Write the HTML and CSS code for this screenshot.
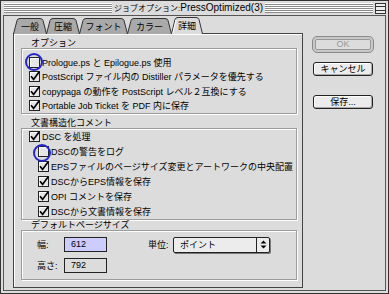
FILE: index.html
```html
<!DOCTYPE html>
<html>
<head>
<meta charset="utf-8">
<link rel="stylesheet" href="styles.css">
</head>
<body>
<div class="window">
  <div class="titlebar">
    <div class="stripes"></div>
    <div class="title"><span class="tj">ジョブオプション:</span>PressOptimized(3)</div>
    <div class="stripes"></div>
    <div class="wbox"><div class="wline"></div></div>
  </div>
  <div class="frame">
    <div class="left">
      <div class="tabs">
        <div class="tab t1"><svg width="34" height="17" viewBox="0 0 34 17"><path d="M0.5 17 L4 3.5 Q4.6 1.5 7 1.5 H27 Q29.4 1.5 30 3.5 L33.5 17" fill="#a9a9a9" stroke="#333"/></svg><span>一般</span></div>
        <div class="tab t2"><svg width="34" height="17" viewBox="0 0 34 17"><path d="M0.5 17 L4 3.5 Q4.6 1.5 7 1.5 H27 Q29.4 1.5 30 3.5 L33.5 17" fill="#a9a9a9" stroke="#333"/></svg><span>圧縮</span></div>
        <div class="tab t3"><svg width="49" height="17" viewBox="0 0 49 17"><path d="M0.5 17 L4 3.5 Q4.6 1.5 7 1.5 H42 Q44.4 1.5 45 3.5 L48.5 17" fill="#a9a9a9" stroke="#333"/></svg><span>フォント</span></div>
        <div class="tab t4"><svg width="45" height="17" viewBox="0 0 45 17"><path d="M0.5 17 L4 3.5 Q4.6 1.5 7 1.5 H38 Q40.4 1.5 41 3.5 L44.5 17" fill="#a9a9a9" stroke="#333"/></svg><span>カラー</span></div>
        <div class="tab t5 active"><svg width="32" height="17" viewBox="0 0 32 17"><path d="M0.5 17 L4 2.5 Q4.6 0.5 7 0.5 H25 Q27.4 0.5 28 2.5 L31.5 17" fill="#dcdcdc" stroke="#333"/><path d="M1.8 16.5 L5 3" stroke="#fff" fill="none"/></svg><span>詳細</span></div>
      </div>
      <div class="panel">
        <div class="group g1">
          <div class="glabel">オプション</div>
          <div class="gbox">
            <div class="row"><span class="cb"></span><span>Prologue.ps と Epilogue.ps 使用</span></div>
            <div class="row"><span class="cb on"><svg class="ck" viewBox="0 0 11 11"><path d="M2 5.2 L4.6 8.4 L10.2 0.8"/></svg></span><span>PostScript ファイル内の Distiller パラメータを優先する</span></div>
            <div class="row"><span class="cb on"><svg class="ck" viewBox="0 0 11 11"><path d="M2 5.2 L4.6 8.4 L10.2 0.8"/></svg></span><span>copypaga の動作を PostScript レベル２互換にする</span></div>
            <div class="row"><span class="cb on"><svg class="ck" viewBox="0 0 11 11"><path d="M2 5.2 L4.6 8.4 L10.2 0.8"/></svg></span><span>Portable Job Ticket を PDF 内に保存</span></div>
          </div>
        </div>
        <div class="group g2">
          <div class="glabel">文書構造化コメント</div>
          <div class="gbox">
            <div class="row"><span class="cb on"><svg class="ck" viewBox="0 0 11 11"><path d="M2 5.2 L4.6 8.4 L10.2 0.8"/></svg></span><span>DSC を処理</span></div>
            <div class="row sub"><span class="cb"></span><span>DSCの警告をログ</span></div>
            <div class="row sub"><span class="cb on"><svg class="ck" viewBox="0 0 11 11"><path d="M2 5.2 L4.6 8.4 L10.2 0.8"/></svg></span><span>EPSファイルのページサイズ変更とアートワークの中央配置</span></div>
            <div class="row sub"><span class="cb on"><svg class="ck" viewBox="0 0 11 11"><path d="M2 5.2 L4.6 8.4 L10.2 0.8"/></svg></span><span>DSCからEPS情報を保存</span></div>
            <div class="row sub"><span class="cb on"><svg class="ck" viewBox="0 0 11 11"><path d="M2 5.2 L4.6 8.4 L10.2 0.8"/></svg></span><span>OPI コメントを保存</span></div>
            <div class="row sub"><span class="cb on"><svg class="ck" viewBox="0 0 11 11"><path d="M2 5.2 L4.6 8.4 L10.2 0.8"/></svg></span><span>DSCから文書情報を保存</span></div>
          </div>
        </div>
        <div class="group g3">
          <div class="glabel">デフォルトページサイズ</div>
          <div class="gbox sizes">
            <span class="flabel">幅:</span>
            <span class="field hl">612</span>
            <span></span>
            <span class="flabel">単位:</span>
            <span class="select"><span class="sval">ポイント</span><span class="sarrow"><svg width="7" height="9" viewBox="0 0 7 9"><path d="M3.5 0.5 L6.5 3.5 H0.5 Z M3.5 8.5 L6.5 5.5 H0.5 Z" fill="#000"/></svg></span></span>
            <span class="flabel">高さ:</span>
            <span class="field">792</span>
          </div>
        </div>
      </div>
    </div>
    <div class="right">
      <div class="okring"><div class="btn ok">OK</div></div>
      <div class="btn cancel">キャンセル</div>
      <div class="btn save">保存...</div>
    </div>
  </div>
  <div class="mark m1"></div>
  <div class="mark m2"></div>
</div>
</body>
</html>
```

FILE: styles.css
```css
body {
  margin: 0;
  width: 389px;
  height: 294px;
  overflow: hidden;
  background: #dcdcdc;
  font-family: "Liberation Sans", "Noto Sans CJK JP", sans-serif;
  font-size: 9px;
  color: #000;
}

.window {
  position: relative;
  width: 389px;
  height: 294px;
  box-sizing: border-box;
  border: 1px solid #333;
  background: #dcdcdc;
  display: flex;
  flex-direction: column;
}

.titlebar {
  height: 14px;
  display: flex;
  align-items: center;
  padding: 0 2px 0 3px;
}

.stripes {
  flex: 1;
  height: 10px;
  background: repeating-linear-gradient(to bottom, #fff 0 1px, #8c8c8c 1px 2px);
}

.title {
  font-size: 10px;
  line-height: 14px;
  padding: 0 2px;
  white-space: nowrap;
}

.tj {
  font-size: 8px;
}

.wbox {
  width: 9px;
  height: 9px;
  margin-left: 2px;
  border: 1px solid #333;
  background: #eee;
  display: flex;
  align-items: center;
}

.wline {
  width: 100%;
  height: 3px;
  border-top: 1px solid #333;
  border-bottom: 1px solid #333;
}

.frame {
  flex: 1;
  margin: 0 2px 2px 2px;
  border: 1px solid #555;
  display: flex;
  padding: 1px 0 0 9px;
}

.left {
  width: 290px;
  display: flex;
  flex-direction: column;
}

.tabs {
  display: flex;
  height: 17px;
  margin-bottom: -1px;
  position: relative;
  z-index: 1;
}

.tab {
  position: relative;
  height: 17px;
  margin-right: -1px;
  display: flex;
  justify-content: center;
}

.tab svg {
  position: absolute;
  left: 0;
  top: 0;
}

.tab span {
  position: relative;
  line-height: 18px;
  padding-top: 1px;
}

.t1 { width: 34px; }
.t2 { width: 34px; }
.t3 { width: 49px; }
.t4 { width: 45px; }
.t5 { width: 32px; }

.tab.active span {
  padding-top: 0;
}

.panel {
  height: 255px;
  box-sizing: border-box;
  border: 1px solid #444;
  box-shadow: inset 1px 1px 0 #fff;
  padding: 5px 5px 0 7px;
}

.glabel {
  height: 9px;
  line-height: 9px;
  padding-left: 10px;
  white-space: nowrap;
}

.gbox {
  border: 1px solid #9c9c9c;
  box-shadow: inset 1px 1px 0 #fff, 1px 1px 0 #fff;
}

.g1 .gbox {
  padding: 6px 0 0 7px;
}

.g1 .row {
  height: 14.5px;
}

.g2 {
  margin-top: 5px;
}

.g2 .gbox {
  padding: 0 0 0 7px;
}

.g2 .row {
  height: 15px;
}

.g3 {
  margin-top: 1px;
}

.row {
  display: flex;
  align-items: center;
  gap: 2px;
  white-space: nowrap;
}

.row.sub {
  padding-left: 9px;
}

.cb {
  position: relative;
  width: 11px;
  height: 11px;
  box-sizing: border-box;
  border: 1px solid #222;
  background: #e6e6e6;
  box-shadow: inset 1px 1px 0 #fff;
  flex: none;
}

.ck {
  position: absolute;
  left: -1px;
  top: -1px;
  width: 11px;
  height: 11px;
  overflow: visible;
}

.ck path {
  fill: none;
  stroke: #000;
  stroke-width: 1.7;
}

.sizes {
  display: grid;
  grid-template-columns: 27px 43px 41px 25px 97px;
  grid-template-rows: 15px 15px;
  row-gap: 6px;
  align-items: center;
  padding: 6px 0 6px 15px;
}

.flabel {
  white-space: nowrap;
}

.field {
  height: 15px;
  box-sizing: border-box;
  border: 1px solid #222;
  background: #dcdcdc;
  padding-left: 6px;
  line-height: 13px;
}

.field.hl {
  background: #ccccff;
}

.select {
  height: 16px;
  box-sizing: border-box;
  border: 1px solid #222;
  border-radius: 2px;
  background: #ececec;
  box-shadow: 1px 1px 0 #777;
  display: flex;
}

.sval {
  flex: 1;
  padding-left: 6px;
  line-height: 14px;
}

.sarrow {
  width: 12px;
  border-left: 1px solid #222;
  display: flex;
  align-items: center;
  justify-content: center;
}

.right {
  width: 62px;
  margin-left: 9px;
  padding-top: 19px;
  display: flex;
  flex-direction: column;
}

.okring {
  height: 17px;
  box-sizing: border-box;
  border: 1px solid #8a8a8a;
  border-radius: 5px;
  padding: 2px;
  background: #c8c8c8;
}

.btn {
  box-sizing: border-box;
  border: 1px solid #222;
  border-radius: 3px;
  background: #ececec;
  box-shadow: inset -1px -1px 0 #aaa, inset 1px 1px 0 #fff;
  text-align: center;
}

.btn.ok {
  height: 11px;
  line-height: 9px;
  border-color: #999;
  color: #9a9a9a;
  border-radius: 2px;
  box-shadow: none;
  background: #dcdcdc;
}

.cancel {
  height: 14px;
  line-height: 12px;
  margin: 9px 1px 0 1px;
}

.save {
  height: 14px;
  line-height: 12px;
  margin: 19px 1px 0 1px;
}

.mark {
  position: absolute;
  width: 18px;
  height: 18px;
  box-sizing: border-box;
  border: 2px solid #2626c8;
  border-radius: 50%;
}

.m1 {
  left: 24px;
  top: 52px;
}

.m2 {
  left: 32px;
  top: 143px;
}
```
